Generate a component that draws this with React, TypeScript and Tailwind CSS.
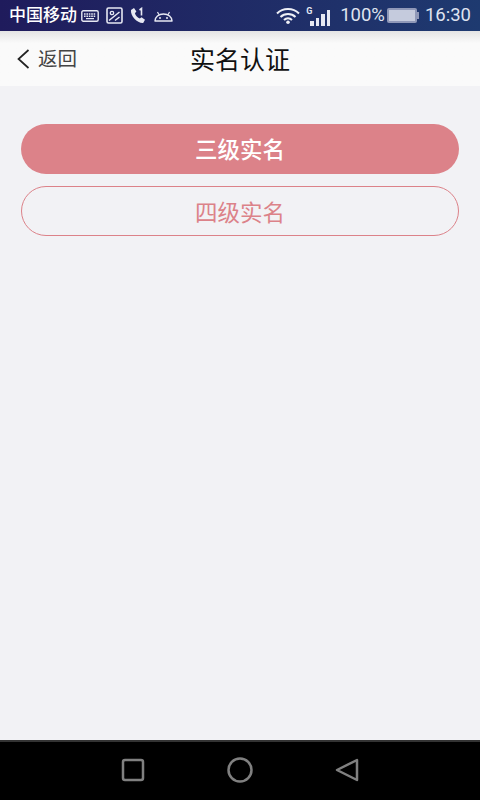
const cjk = "font-['Roboto','Noto_Sans_CJK_SC',sans-serif]"

function KeyboardIcon() {
  return (
    <svg width="18" height="12" viewBox="0 0 18 12" fill="none">
      <rect x="0.8" y="0.8" width="16.4" height="10.4" rx="1.5" stroke="#e6e8f2" strokeWidth="1.4" />
      <path d="M3 4h12M3 6.200h12" stroke="#e6e8f2" strokeWidth="1.400" strokeDasharray="1.600 0.800" />
      <path d="M5 8.600h8" stroke="#e6e8f2" strokeWidth="1.200" />
    </svg>
  )
}

function PictureIcon() {
  return (
    <svg width="17" height="17" viewBox="0 0 17 17" fill="none">
      <rect x="1" y="1" width="15" height="15" rx="1.5" stroke="#e6e8f2" strokeWidth="1.600" />
      <circle cx="6" cy="6" r="1.700" stroke="#e6e8f2" strokeWidth="1.300" />
      <path d="M3 13.500 13.500 5M9 13.500l4.500-3.500" stroke="#e6e8f2" strokeWidth="1.500" />
    </svg>
  )
}

function CallIcon() {
  return (
    <svg width="17" height="18" viewBox="0 0 17 18" fill="none">
      <path
        d="M1 3 4 1l2.400 3.600-1.500 1.600c.6 2.200 2.800 4.600 5 5.400l1.600-1.400 3.500 2.500-1.800 3.300C7.500 16.500.2 9 1 3Z"
        fill="#e6e8f2"
      />
      <path d="M9.500 3 11.500 1.500v7" stroke="#e6e8f2" strokeWidth="1.600" />
    </svg>
  )
}

function AndroidIcon() {
  return (
    <svg width="19" height="12" viewBox="0 0 19 12" fill="none">
      <path d="M1 11c0-4 3.600-7 8.500-7s8.500 3 8.500 7Z" stroke="#e6e8f2" strokeWidth="1.500" strokeLinejoin="round" />
      <path d="M5 4.800 3.500 2M14 4.800 15.500 2" stroke="#e6e8f2" strokeWidth="1.200" />
      <circle cx="6" cy="8" r="1" fill="#e6e8f2" />
      <circle cx="13" cy="8" r="1" fill="#e6e8f2" />
    </svg>
  )
}

function WifiIcon() {
  return (
    <svg width="24" height="17" viewBox="0 0 24 17" fill="none">
      <path d="M1 6.500c6-6 16-6 22 0" stroke="#eef0f6" strokeWidth="2" />
      <path d="M4.500 10c4-4 11-4 15 0" stroke="#eef0f6" strokeWidth="2" />
      <path d="M8 13c2.300-2.200 5.700-2.200 8 0" stroke="#eef0f6" strokeWidth="2" />
      <circle cx="12" cy="15.200" r="1.800" fill="#eef0f6" />
    </svg>
  )
}

function SignalIcon() {
  return (
    <div className="relative h-[20px] w-[24px]">
      <span className="absolute left-0 top-[1px] text-[9px] leading-[8px] font-bold text-[#e6e8f2] font-['Roboto',sans-serif]">G</span>
      <div className="absolute bottom-0 left-[4px] flex items-end gap-[2px]">
        <div className="h-[5px] w-[3.500px] bg-[#e6e8f2]" />
        <div className="h-[8px] w-[3.500px] bg-[#e6e8f2]" />
        <div className="h-[12px] w-[3.500px] bg-[#e6e8f2]" />
        <div className="h-[16px] w-[3.500px] bg-[#e6e8f2]" />
      </div>
    </div>
  )
}

function BatteryIcon() {
  return (
    <div className="flex items-center">
      <div className="h-[15px] w-[30px] rounded-[2px] border-2 border-[#8f98b8] bg-[#c5cbdd]" />
      <div className="h-[7px] w-[2px] bg-[#8f98b8]" />
    </div>
  )
}

function StatusBar() {
  return (
    <div className={`flex h-[31px] items-center justify-between bg-gradient-to-r from-[#1f1b5c] to-[#1e3a70] pl-[9px] pr-[9px] ${cjk}`}>
      <div className="flex items-center">
        <span className="text-[17px] font-medium leading-none text-white">中国移动</span>
        <div className="ml-[4px] flex items-center gap-[7px]">
          <KeyboardIcon />
          <PictureIcon />
          <CallIcon />
          <AndroidIcon />
        </div>
      </div>
      <div className="flex items-center text-[#dfe3ef]">
        <WifiIcon />
        <div className="ml-[6px]">
          <SignalIcon />
        </div>
        <span className="ml-[10px] text-[18.500px] leading-none">100%</span>
        <div className="ml-[2px]">
          <BatteryIcon />
        </div>
        <span className="ml-[6px] text-[18.500px] leading-none">16:30</span>
      </div>
    </div>
  )
}

function NavBar() {
  return (
    <div className={`relative flex h-[55px] items-center justify-center bg-gradient-to-b from-[#e4e4e4] from-0% via-[#fafafa] via-[22%] to-[#fafafa] pt-[3px] ${cjk}`}>
      <div className="absolute left-[17px] top-[18px] flex items-center">
        <svg width="13" height="20" viewBox="0 0 13 20" fill="none">
          <path d="M11.500 1 1.500 10l10 9" stroke="#222" strokeWidth="1.700" />
        </svg>
        <span className="ml-[8px] pt-[1px] text-[19.500px] leading-none text-[#444]">返回</span>
      </div>
      <span className="text-[25px] leading-none text-[#111]">实名认证</span>
    </div>
  )
}

function NavKeys() {
  return (
    <div className="flex h-[60px] items-center justify-center gap-[82px] border-t-2 border-[#333] bg-black pb-[2px]">
      <svg width="24" height="24" viewBox="0 0 24 24" fill="none">
        <rect x="2" y="2" width="20" height="20" rx="2" stroke="#808080" strokeWidth="2.500" />
      </svg>
      <svg width="26" height="26" viewBox="0 0 26 26" fill="none">
        <circle cx="13" cy="13" r="11.500" stroke="#808080" strokeWidth="2.500" />
      </svg>
      <svg width="24" height="24" viewBox="0 0 24 24" fill="none">
        <path d="M22 2v20L2 12Z" stroke="#808080" strokeWidth="2.500" strokeLinejoin="round" />
      </svg>
    </div>
  )
}

export default function App() {
  return (
    <div className="flex h-[800px] w-[480px] flex-col overflow-hidden bg-[#f2f2f5]">
      <StatusBar />
      <NavBar />
      <div className={`flex flex-1 flex-col gap-[12px] px-[21px] pt-[38px] ${cjk}`}>
        <button className="flex h-[50px] items-center justify-center rounded-full bg-[#dc8289] pt-[3px] text-[22.500px] font-medium text-white">
          三级实名
        </button>
        <button className="flex h-[50px] items-center justify-center rounded-full border border-[#dc8289] pt-[5px] text-[22.500px] text-[#dc8289]">
          四级实名
        </button>
      </div>
      <NavKeys />
    </div>
  )
}
